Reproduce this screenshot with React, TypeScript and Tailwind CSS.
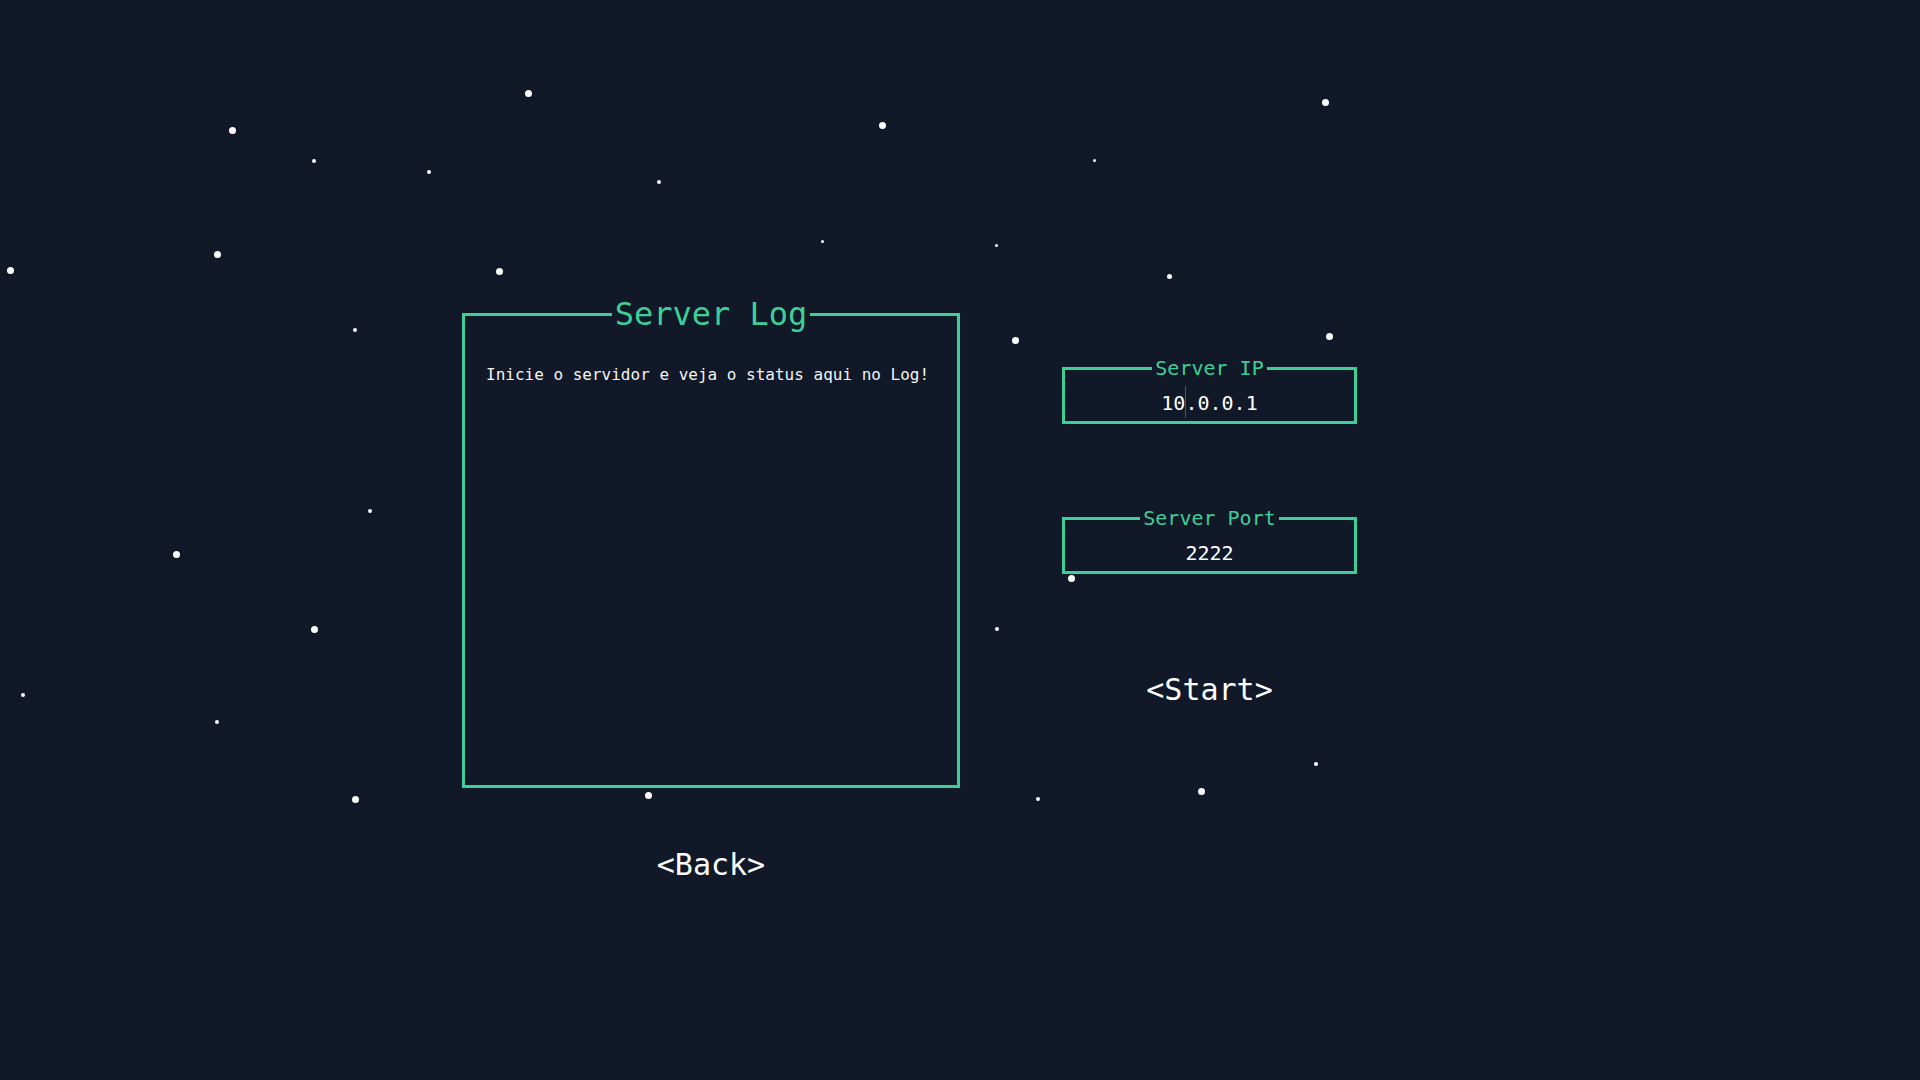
import React from 'react';

type Star = { x: number; y: number; s: number };

// background star field (center coords, diameter)
const STARS: Star[] = [
  { x: 528, y: 93, s: 7 },
  { x: 232, y: 130, s: 7 },
  { x: 314, y: 161, s: 4 },
  { x: 429, y: 172, s: 4 },
  { x: 659, y: 182, s: 4 },
  { x: 882, y: 125, s: 7 },
  { x: 1325, y: 102, s: 7 },
  { x: 1094, y: 160, s: 3 },
  { x: 10, y: 270, s: 7 },
  { x: 217, y: 254, s: 7 },
  { x: 499, y: 271, s: 7 },
  { x: 822, y: 241, s: 3 },
  { x: 996, y: 245, s: 3 },
  { x: 1169, y: 276, s: 5 },
  { x: 355, y: 330, s: 4 },
  { x: 1015, y: 340, s: 7 },
  { x: 1329, y: 336, s: 7 },
  { x: 370, y: 511, s: 4 },
  { x: 176, y: 554, s: 7 },
  { x: 314, y: 629, s: 7 },
  { x: 997, y: 629, s: 4 },
  { x: 1071, y: 578, s: 7 },
  { x: 23, y: 695, s: 4 },
  { x: 217, y: 722, s: 4 },
  { x: 355, y: 799, s: 7 },
  { x: 648, y: 795, s: 7 },
  { x: 1038, y: 799, s: 4 },
  { x: 1201, y: 791, s: 7 },
  { x: 1316, y: 764, s: 4 },
];

const InputBox: React.FC<{ label: string; children: React.ReactNode; className?: string }> = ({ label, children, className }) => (
  <fieldset className={`w-full h-[66px] border-[3px] border-[#3ecf98] bg-[#111827] ${className ?? ''}`}>
    <legend className="mx-auto px-[3px] text-[20px] leading-none text-[#3ecf98]">{label}</legend>
    <div className="flex justify-center pt-[15px] text-[20px] leading-none text-white">{children}</div>
  </fieldset>
);

const App: React.FC = () => {
  return (
    <div className="relative min-h-screen w-full overflow-hidden bg-[#111827] font-['DejaVu_Sans_Mono','Liberation_Mono',monospace]">
      {/* Stars */}
      <div className="absolute inset-0 pointer-events-none">
        {STARS.map((st, i) => (
          <span
            key={i}
            className="absolute rounded-full bg-white"
            style={{ left: st.x - st.s / 2, top: st.y - st.s / 2, width: st.s, height: st.s }}
          />
        ))}
      </div>

      <div className="relative flex items-start gap-[102px] pl-[462px] pt-[298px]">
        {/* Log column */}
        <div className="flex w-[498px] flex-col items-center">
          <fieldset className="h-[490px] w-full border-[3px] border-[#3ecf98] bg-[#111827] px-[21px]">
            <legend className="mx-auto px-[3px] text-[32px] leading-none text-[#3ecf98]">Server Log</legend>
            <p className="pt-[33px] text-[16px] leading-6 text-[#f3f4f6]">Inicie o servidor e veja o status aqui no Log!</p>
          </fieldset>
          <button className="mt-[62px] text-[30px] leading-none text-white">&lt;Back&gt;</button>
        </div>

        {/* Settings column */}
        <div className="flex w-[295px] flex-col items-center pt-[60px]">
          <InputBox label="Server IP">
            <span>10</span>
            <span className="inline-block h-[32px] w-px -mr-px -mt-[7px] bg-[#4b5563]" />
            <span>.0.0.1</span>
          </InputBox>
          <InputBox label="Server Port" className="mt-[84px]">
            <span>2222</span>
          </InputBox>
          <button className="mt-[101px] text-[30px] leading-none text-white">&lt;Start&gt;</button>
        </div>
      </div>
    </div>
  );
};

export default App;
